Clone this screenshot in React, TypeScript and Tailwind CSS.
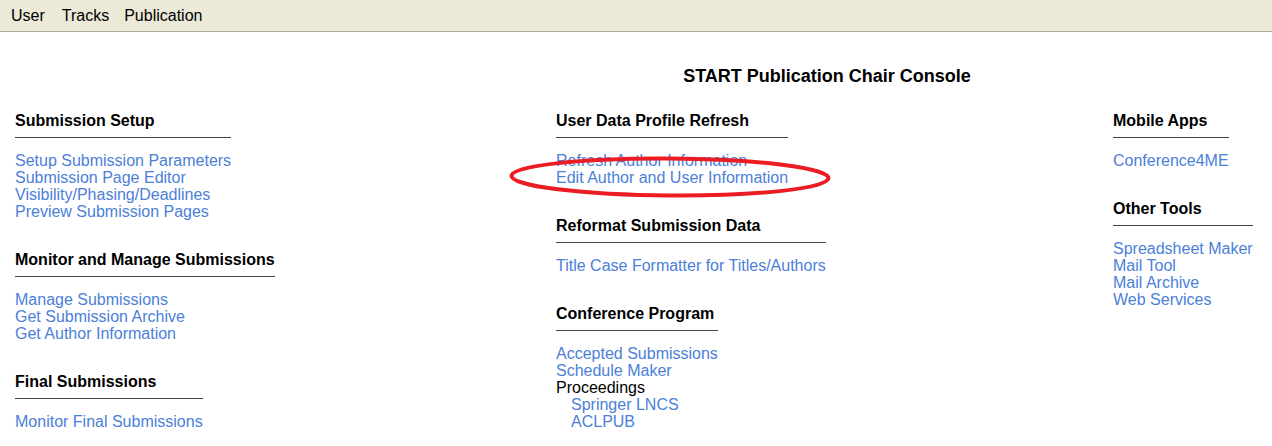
import React from "react";

type Item = { label: string; link?: boolean; indent?: boolean };
type Sec = { title: string; items: Item[] };

const L = (label: string): Item => ({ label, link: true });

const left: Sec[] = [
  {
    title: "Submission Setup",
    items: [
      L("Setup Submission Parameters"),
      L("Submission Page Editor"),
      L("Visibility/Phasing/Deadlines"),
      L("Preview Submission Pages"),
    ],
  },
  {
    title: "Monitor and Manage Submissions",
    items: [L("Manage Submissions"), L("Get Submission Archive"), L("Get Author Information")],
  },
  { title: "Final Submissions", items: [L("Monitor Final Submissions")] },
];

const middle: Sec[] = [
  {
    title: "User Data Profile Refresh",
    items: [L("Refresh Author Information"), L("Edit Author and User Information")],
  },
  { title: "Reformat Submission Data", items: [L("Title Case Formatter for Titles/Authors")] },
  {
    title: "Conference Program",
    items: [
      L("Accepted Submissions"),
      L("Schedule Maker"),
      { label: "Proceedings" },
      { label: "Springer LNCS", link: true, indent: true },
      { label: "ACLPUB", link: true, indent: true },
    ],
  },
];

const right: Sec[] = [
  { title: "Mobile Apps", items: [L("Conference4ME")] },
  {
    title: "Other Tools",
    items: [L("Spreadsheet Maker"), L("Mail Tool"), L("Mail Archive"), L("Web Services")],
  },
];

function Section({ s }: { s: Sec }) {
  return (
    <div className="w-fit mb-[31px]">
      <div className="text-[16px] font-bold leading-[17px] text-black pb-[8px] border-b border-[#444]">
        {s.title}
      </div>
      <div className="mt-[14px] flex flex-col">
        {s.items.map((it) => (
          <div
            key={it.label}
            className={`text-[16px] leading-[17px] whitespace-nowrap ${
              it.link ? "text-[#4c80d8]" : "text-black"
            } ${it.indent ? "pl-[15px]" : ""}`}
          >
            {it.label}
          </div>
        ))}
      </div>
    </div>
  );
}

function Column({ secs }: { secs: Sec[] }) {
  return (
    <div className="flex flex-col">
      {secs.map((s) => (
        <Section key={s.title} s={s} />
      ))}
    </div>
  );
}

export default function App() {
  return (
    <div
      className="relative w-[1272px] h-[446px] overflow-hidden bg-white text-black"
      style={{ fontFamily: '"Liberation Sans", Arial, sans-serif' }}
    >
      <div className="h-[32px] bg-[#ece9d8] border-b border-[#aca899] flex items-center pl-[11px] pt-[1px] text-[16px] text-black">
        <span>User</span>
        <span className="ml-[17px]">Tracks</span>
        <span className="ml-[15px]">Publication</span>
      </div>
      <div className="mt-[34px] pl-[382px] text-center text-[18px] font-bold leading-[20px]">
        START Publication Chair Console
      </div>
      <div className="mt-[26px] grid grid-cols-[541px_557px_1fr] pl-[15px]">
        <Column secs={left} />
        <Column secs={middle} />
        <Column secs={right} />
      </div>
      <svg
        className="absolute left-0 top-0 pointer-events-none"
        width="1272"
        height="446"
        viewBox="0 0 1272 446"
      >
        <ellipse
          cx="670"
          cy="177"
          rx="158.5"
          ry="18.5"
          fill="none"
          stroke="#ec1c24"
          strokeWidth="4"
          transform="rotate(0.4 670 177)"
        />
      </svg>
    </div>
  );
}
